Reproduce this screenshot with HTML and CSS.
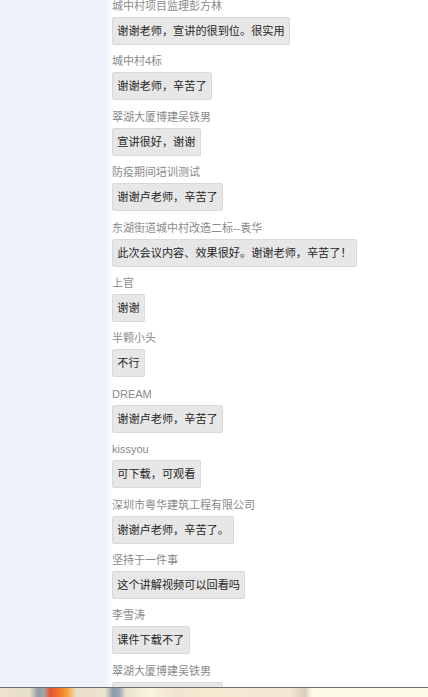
FILE: index.html
```html
<html>
<head>
<title>互动评论</title>
<meta name="viewport" content="width=device-width, initial-scale=1">
<link rel="stylesheet" href="styles.css">
</head>
<body>
<div class="page">
  <div class="sidebar"></div>
  <div class="chat">
    <div class="msg"><div class="name">城中村项目监理彭方林</div><div class="bubble">谢谢老师，宣讲的很到位。很实用</div></div>
    <div class="msg"><div class="name">城中村4标</div><div class="bubble">谢谢老师，辛苦了</div></div>
    <div class="msg"><div class="name">翠湖大厦博建吴铁男</div><div class="bubble">宣讲很好，谢谢</div></div>
    <div class="msg"><div class="name">防疫期间培训测试</div><div class="bubble">谢谢卢老师，辛苦了</div></div>
    <div class="msg"><div class="name">东湖街道城中村改造二标--袁华</div><div class="bubble">此次会议内容、效果很好。谢谢老师，辛苦了！</div></div>
    <div class="msg"><div class="name">上官</div><div class="bubble">谢谢</div></div>
    <div class="msg"><div class="name">半颗小头</div><div class="bubble">不行</div></div>
    <div class="msg"><div class="name">DREAM</div><div class="bubble">谢谢卢老师，辛苦了</div></div>
    <div class="msg"><div class="name">kissyou</div><div class="bubble">可下载，可观看</div></div>
    <div class="msg"><div class="name">深圳市粤华建筑工程有限公司</div><div class="bubble">谢谢卢老师，辛苦了。</div></div>
    <div class="msg"><div class="name">坚持于一件事</div><div class="bubble">这个讲解视频可以回看吗</div></div>
    <div class="msg"><div class="name">李雪涛</div><div class="bubble">课件下载不了</div></div>
    <div class="msg"><div class="name">翠湖大厦博建吴铁男</div><div class="bubble">谢谢老师，辛苦了！</div></div>
  </div>
</div>
<div class="taskbar"></div>
</body>
</html>
```

FILE: styles.css
```css
html, body {
  margin: 0;
  height: 100%;
  overflow: hidden;
  background: #fff;
  font-family: "Liberation Sans", "Noto Sans CJK SC", sans-serif;
}

.page {
  display: flex;
  height: 100%;
}

.sidebar {
  width: 112px;
  flex: none;
  background: linear-gradient(to right, #eef2fa 0, #eef2fa 104px, #f4f6fb 108px, #fff 112px);
}

.chat {
  display: flex;
  flex-direction: column;
  align-items: flex-start;
  gap: 8.4px;
  margin-top: -2px;
}

.msg {
  display: flex;
  flex-direction: column;
  align-items: flex-start;
}

.name {
  font-size: 11px;
  line-height: 16px;
  color: #8a8a8a;
  margin-bottom: 3px;
}

.bubble {
  font-size: 11.17px;
  line-height: 16px;
  color: #262626;
  background: #e7e7e7;
  border: 1px solid #d9d9d9;
  border-radius: 2px;
  padding: 5px 4.3px;
  white-space: nowrap;
}

.taskbar {
  position: fixed;
  left: 0;
  right: 0;
  bottom: 0;
  height: 9px;
  border-top: 1px solid #6e6e6e;
  background: linear-gradient(to right,
    #ede3cf 0, #e6ddc9 30px, #8f9aa8 38px, #a8a3a0 44px, #e8552e 50px, #f07a2a 60px, #f2a640 68px,
    #e9dfc9 76px, #ece3ce 105px, #8e9aab 113px, #9aa3b0 119px, #ece3cf 126px, #f5ecd8 140px,
    #fbf3df 150px, #f0e6cf 175px, #f4ead2 200px, #f3e9d2 290px, #d9cfb8 305px, #fdf9e6 312px, #fefbea 428px);
}
```
